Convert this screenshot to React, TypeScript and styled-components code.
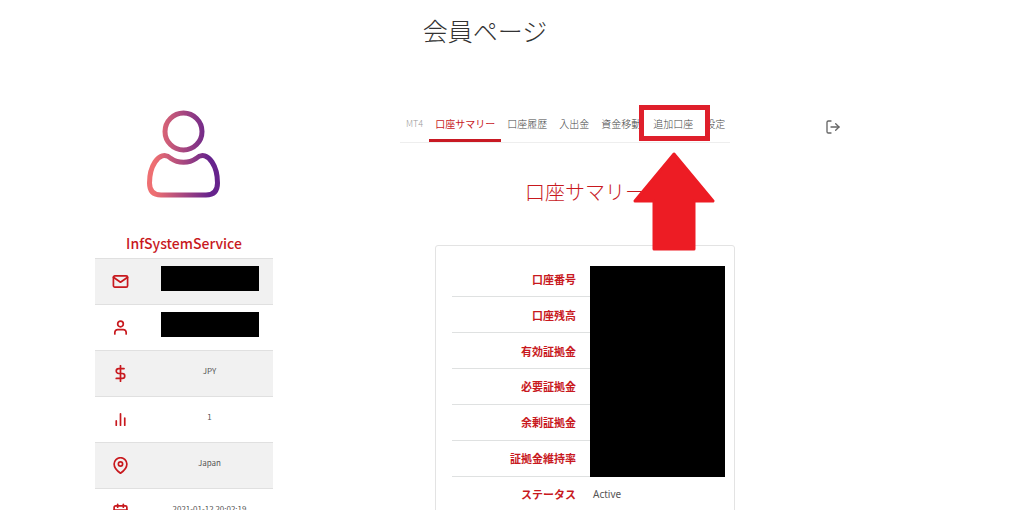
import React from 'react';
import styled, { createGlobalStyle } from 'styled-components';
import {
  FiBarChart2,
  FiCalendar,
  FiDollarSign,
  FiLogOut,
  FiMail,
  FiMapPin,
  FiUser,
} from 'react-icons/fi';

const red = '#c8191e';
const marker = '#ed1c24';

const GlobalStyle = createGlobalStyle`
  * { box-sizing: border-box; }
  body {
    margin: 0;
    background: #fff;
    color: #555;
    font-family: "Noto Sans CJK JP", "Noto Sans", sans-serif;
  }
`;

const Page = styled.div`
  height: 100vh;
  overflow: hidden;
`;

const Header = styled.header`
  padding: 11px 54px 0 0;
`;

const PageTitle = styled.h1`
  margin: 0;
  text-align: center;
  font-size: 25px;
  line-height: 38px;
  font-weight: 300;
  color: #333;
`;

const Columns = styled.div`
  display: grid;
  grid-template-columns: 400fr 335fr 289fr;
  align-items: start;
  padding-top: 56px;
`;

const Sidebar = styled.aside`
  display: flex;
  flex-direction: column;
  align-items: center;
  width: 178px;
  margin-left: 95px;
  padding-top: 5px;
`;

const UserName = styled.h2`
  margin: 34px 0 4px;
  font-size: 14px;
  line-height: 22px;
  font-weight: 500;
  color: ${red};
`;

const ProfileTable = styled.table`
  width: 100%;
  border-collapse: collapse;
  table-layout: fixed;
`;

const ProfileRow = styled.tr`
  height: 46px;
  border-top: 1px solid #e0e0e0;
  &:nth-child(odd) { background: #f1f1f1; }
`;

const IconCell = styled.th`
  width: 51px;
  padding: 0;
  color: ${red};
  svg { display: block; margin: 0 auto; }
`;

const ValueCell = styled.td`
  padding: 0 0 6px;
  text-align: center;
  font-size: 8px;
  line-height: 12px;
  font-weight: 400;
  color: #555;
`;

const Mask = styled.div`
  width: 98px;
  height: 25px;
  margin: 0 auto;
  background: #000;
`;

const Main = styled.main`
  min-width: 0;
`;

const Tabs = styled.nav`
  display: flex;
  width: 330px;
  height: 38px;
  border-bottom: 1px solid #eee;
`;

const TabItem = styled.div`
  position: relative;
  display: flex;
`;

const Tab = styled.a<{ $tone?: 'active' | 'muted' }>`
  padding: 9px 6px 0;
  border-bottom: 3px solid ${(p) => (p.$tone === 'active' ? '#c81923' : 'transparent')};
  font-size: ${(p) => (p.$tone === 'muted' ? 9 : 10)}px;
  line-height: 20px;
  font-weight: ${(p) => (p.$tone === 'active' ? 400 : 300)};
  color: ${(p) => (p.$tone === 'active' ? red : p.$tone === 'muted' ? '#999' : '#444')};
  text-decoration: none;
  white-space: nowrap;
`;

const Highlight = styled.div`
  position: absolute;
  z-index: 1;
  top: 0;
  left: -8px;
  width: 71px;
  height: 36px;
  border: 5px solid #df1f2b;
`;

const Arrow = styled.svg`
  position: absolute;
  z-index: 1;
  top: 47px;
  left: -14px;
`;

const Section = styled.section`
  padding-left: 35px;
`;

const SectionTitle = styled.h2`
  margin: 34px 0 38px;
  text-align: center;
  font-size: 20px;
  line-height: 30px;
  font-weight: 300;
  color: ${red};
`;

const Card = styled.div`
  position: relative;
  padding: 16px 9px 30px 16px;
  border: 1px solid #e3e3e3;
  border-radius: 3px;
`;

const SummaryTable = styled.table`
  width: 100%;
  height: 249px;
  border-collapse: collapse;
  table-layout: fixed;
`;

const SummaryRow = styled.tr`
  border-bottom: 1px solid #dfe1e1;
  &:last-child { border-bottom: 0; }
`;

const Label = styled.th`
  width: 124px;
  padding: 0;
  text-align: right;
  font-size: 11px;
  line-height: 16px;
  font-weight: 700;
  color: ${red};
`;

const Value = styled.td`
  padding: 0 0 0 17px;
  font-family: "Noto Sans", sans-serif;
  font-size: 10px;
  line-height: 16px;
  color: #555;
`;

const MaskPanel = styled.div`
  position: absolute;
  top: 20px;
  left: 154px;
  right: 9px;
  height: 211px;
  background: #000;
`;

const LogoutButton = styled.button`
  justify-self: start;
  margin: 14px 0 0 90px;
  padding: 0;
  border: 0;
  background: none;
  color: #666;
  line-height: 0;
  cursor: pointer;
`;

const profile = [
  { icon: FiMail, name: 'Mail' },
  { icon: FiUser, name: 'Name' },
  { icon: FiDollarSign, name: 'Currency', value: 'JPY' },
  { icon: FiBarChart2, name: 'Accounts', value: '1' },
  { icon: FiMapPin, name: 'Country', value: 'Japan' },
  { icon: FiCalendar, name: 'Registered', value: '2021-01-12 20:02:19' },
];

const tabs: { label: string; tone?: 'active' | 'muted'; marked?: boolean }[] = [
  { label: 'MT4', tone: 'muted' },
  { label: '口座サマリー', tone: 'active' },
  { label: '口座履歴' },
  { label: '入出金' },
  { label: '資金移動' },
  { label: '追加口座', marked: true },
  { label: '設定' },
];

const summary = [
  { label: '口座番号' },
  { label: '口座残高' },
  { label: '有効証拠金' },
  { label: '必要証拠金' },
  { label: '余剰証拠金' },
  { label: '証拠金維持率' },
  { label: 'ステータス', value: 'Active' },
];

const Avatar = () => (
  <svg width="74" height="88" viewBox="0 0 74 88" fill="none" aria-hidden="true">
    <defs>
      <linearGradient id="avatar" gradientUnits="userSpaceOnUse" x1="0" y1="0" x2="74" y2="0">
        <stop offset="0.1" stopColor="#ee6f72" />
        <stop offset="0.85" stopColor="#66238c" />
      </linearGradient>
    </defs>
    <g stroke="url(#avatar)" strokeWidth="5">
      <circle cx="36.5" cy="21.5" r="18.5" />
      <path d="M24 48.5C31 53.5 42 53.5 49 48.5C55 43 61 46 65 52C69 58 70.500 66 70.500 73Q70.500 85 59 85H14Q2.500 85 2.500 73C2.500 66 4 58 8 52C12 46 18 43 24 48.500Z" />
    </g>
  </svg>
);

export default function App() {
  return (
    <Page>
      <GlobalStyle />
      <Header>
        <PageTitle>会員ページ</PageTitle>
      </Header>
      <Columns>
        <Sidebar>
          <Avatar />
          <UserName>InfSystemService</UserName>
          <ProfileTable>
            <tbody>
              {profile.map(({ icon: Icon, name, value }) => (
                <ProfileRow key={name}>
                  <IconCell scope="row" aria-label={name}>
                    <Icon size={17} strokeWidth={2.4} />
                  </IconCell>
                  <ValueCell>{value ?? <Mask />}</ValueCell>
                </ProfileRow>
              ))}
            </tbody>
          </ProfileTable>
        </Sidebar>
        <Main>
          <Tabs>
            {tabs.map((t) => (
              <TabItem key={t.label}>
                <Tab href="#" $tone={t.tone}>{t.label}</Tab>
                {t.marked && (
                  <>
                    <Highlight />
                    <Arrow width="82" height="99" viewBox="0 0 82 99" aria-hidden="true">
                      <path
                        d="M41 2L80 49H61V97H21V49H2Z"
                        fill={marker}
                        stroke={marker}
                        strokeWidth="3"
                        strokeLinejoin="round"
                      />
                    </Arrow>
                  </>
                )}
              </TabItem>
            ))}
          </Tabs>
          <Section>
            <SectionTitle>口座サマリー</SectionTitle>
            <Card>
              <SummaryTable>
                <tbody>
                  {summary.map((s) => (
                    <SummaryRow key={s.label}>
                      <Label scope="row">{s.label}</Label>
                      <Value>{s.value}</Value>
                    </SummaryRow>
                  ))}
                </tbody>
              </SummaryTable>
              <MaskPanel />
            </Card>
          </Section>
        </Main>
        <LogoutButton type="button" aria-label="ログアウト">
          <FiLogOut size={16} />
        </LogoutButton>
      </Columns>
    </Page>
  );
}
